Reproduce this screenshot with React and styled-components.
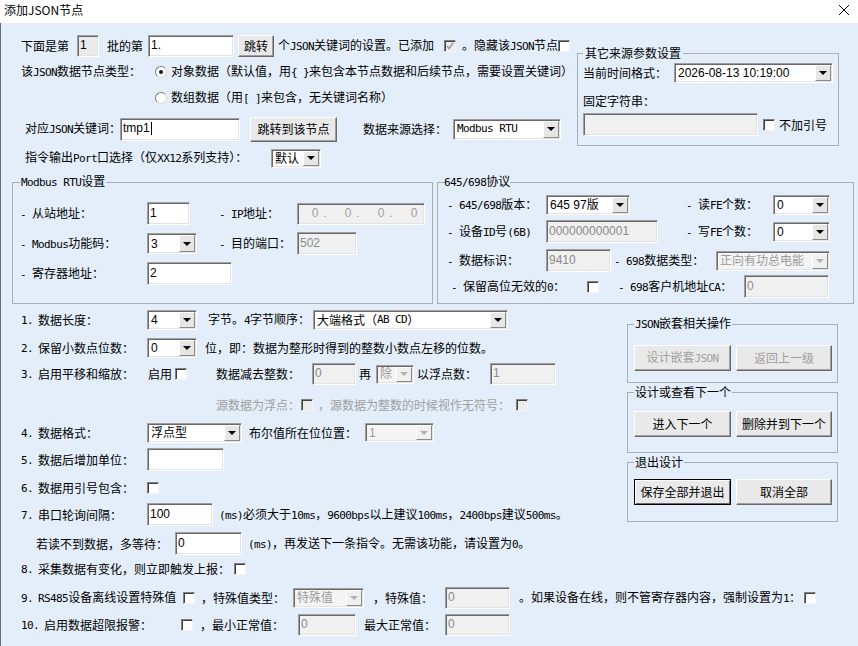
import styled, { createGlobalStyle, css } from "styled-components";

const SANS = `"Noto Sans CJK SC", "Noto Sans", sans-serif`;
const VALUE = `"Liberation Sans", "Noto Sans CJK SC", sans-serif`;

const GlobalStyle = createGlobalStyle`
  html, body {
    margin: 0;
    padding: 0;
    background: #e3eefa;
  }
`;

const Dialog = styled.div`
  width: 858px;
  height: 646px;
  overflow: hidden;
  background: #e3eefa;
  font-family: ${SANS};
  font-size: 12px;
  line-height: 14px;
  color: #000;
  box-shadow: inset 1px 0 0 #6b6b6b;
`;

const TitleBar = styled.div`
  height: 23px;
  box-sizing: border-box;
  padding: 0 8px 3px 4px;
  display: flex;
  align-items: center;
  justify-content: space-between;
  background: #fff;
`;

const Top = styled.div`
  display: flex;
  height: 146px;
`;

const TopMain = styled.div`
  width: 577px;
  box-sizing: border-box;
  padding: 12px 0 0 21px;
`;

const Mid = styled.div`
  display: flex;
  gap: 4px;
  padding-left: 12px;
  margin-top: 5px;
`;

const Lower = styled.div`
  padding-left: 21px;
`;

const LowerTop = styled.div`
  display: flex;
`;

const LowerMain = styled.div`
  width: 606px;
  flex: none;
  padding-top: 5px;
`;

const Side = styled.div`
  display: flex;
  flex-direction: column;
  gap: 2px;
  margin-top: 12px;
`;

const Row = styled.div`
  display: flex;
  align-items: center;
  white-space: nowrap;
  height: ${(p) => p.$h}px;
  margin-top: ${(p) => p.$mt || 0}px;
  padding-left: ${(p) => p.$pl || 0}px;
`;

const ButtonRow = styled.div`
  display: flex;
  gap: 5px;
`;

// half-width latin runs inside dialog captions (narrow fixed pitch)
const Lat = styled.span`
  font-family: "DejaVu Sans Mono", monospace;
  font-size: 11px;
  letter-spacing: -0.6px;
`;

const mixed = (text) =>
  typeof text === "string"
    ? text.split(/([\x20-\x7e]+)/).map((part, i) => (i % 2 ? <Lat key={i}>{part}</Lat> : part))
    : text;

const LabelBox = styled.span`
  flex: none;
  white-space: pre;
  ${(p) => p.$w && css`width: ${p.$w}px;`}
  margin-left: ${(p) => p.$ml || 0}px;
  color: ${(p) => (p.$off ? "#a0a0a0" : "#000")};
`;

const Label = ({ children, ...rest }) => <LabelBox {...rest}>{mixed(children)}</LabelBox>;

const Group = styled.fieldset`
  flex: none;
  box-sizing: border-box;
  min-width: 0;
  margin: ${(p) => p.$mt || 0}px 0 0;
  width: ${(p) => p.$w}px;
  height: ${(p) => p.$h}px;
  padding: ${(p) => p.$pt}px 0 0 ${(p) => p.$pl}px;
  border: 1px solid #a7aeb6;
`;

const LegendBox = styled.legend`
  padding: 0 ${(p) => p.$pad ?? 1}px;
  line-height: 14px;
`;

const Legend = ({ children, ...rest }) => <LegendBox {...rest}>{mixed(children)}</LegendBox>;

const sunken = css`
  border: 1px solid;
  border-color: #a0a0a0 #fff #fff #a0a0a0;
  box-shadow: inset 1px 1px 0 #696969, inset -1px -1px 0 #e3e3e3;
`;

const Edit = styled.div`
  flex: none;
  box-sizing: border-box;
  width: ${(p) => p.$w}px;
  height: ${(p) => p.$h || 23}px;
  margin-left: ${(p) => p.$ml || 0}px;
  display: flex;
  align-items: center;
  padding: 0 2px 2px;
  font-family: ${VALUE};
  background: ${(p) => (p.$off ? "#f0f0f0" : p.$ro ? "#ebebeb" : "#fff")};
  color: ${(p) => (p.$off ? "#8a8a8a" : "#000")};
  ${sunken}
`;

const TextCursor = styled.span`
  width: 1px;
  height: 13px;
  background: #000;
  margin-left: 1px;
`;

const IpBox = styled(Edit)`
  padding-left: 13px;
  color: #a0a0a0;
`;

const Octet = styled.span`
  width: 8px;
  text-align: center;
`;

const Dot = styled.span`
  width: 12px;
  margin-right: 13px;
  text-align: center;
`;

const ComboBox = styled.div`
  flex: none;
  box-sizing: border-box;
  display: flex;
  width: ${(p) => p.$w}px;
  height: ${(p) => p.$h || 20}px;
  margin-left: ${(p) => p.$ml || 0}px;
  padding: 1px;
  background: ${(p) => (p.$off ? "#f4f4f4" : "#fff")};
  ${sunken}
`;

const ComboText = styled.span`
  flex: 1;
  display: flex;
  align-items: center;
  padding-left: 2px;
  overflow: hidden;
  white-space: pre;
  font-family: ${(p) => (p.$mono ? SANS : VALUE)};
  color: ${(p) => (p.$off ? "#9a9a9a" : "#000")};
`;

const ComboArrow = styled.span`
  flex: none;
  width: 16px;
  box-sizing: border-box;
  display: flex;
  align-items: center;
  justify-content: center;
  background: ${(p) => (p.$off ? "#f0f0f0" : "#e6e6e6")};
  border: 1px solid;
  border-color: #fff #8a8a8a #8a8a8a #fff;
  &::after {
    content: "";
    border-left: 4px solid transparent;
    border-right: 4px solid transparent;
    border-top: 4px solid ${(p) => (p.$off ? "#b0b0b0" : "#000")};
  }
`;

const Check = styled.span`
  flex: none;
  box-sizing: border-box;
  width: 12px;
  height: 12px;
  margin-left: ${(p) => p.$ml || 0}px;
  display: flex;
  align-items: center;
  justify-content: center;
  background: ${(p) => (p.$off ? "#ececec" : "#fff")};
  border: 1px solid;
  border-color: #808080 #f4f4f4 #f4f4f4 #808080;
  box-shadow: inset 1px 1px 0 #404040;
`;

const Radio = styled.span`
  flex: none;
  box-sizing: border-box;
  width: 12px;
  height: 12px;
  border-radius: 50%;
  display: flex;
  align-items: center;
  justify-content: center;
  background: #fff;
  border: 1px solid;
  border-color: #7c7c7c #d8d8d8 #d8d8d8 #7c7c7c;
  &::after {
    content: "";
    width: 4px;
    height: 4px;
    border-radius: 50%;
    background: ${(p) => (p.$on ? "#1a1a1a" : "transparent")};
  }
`;

const Btn = styled.button`
  flex: none;
  box-sizing: border-box;
  width: ${(p) => p.$w}px;
  height: ${(p) => p.$h || 26}px;
  margin-left: ${(p) => p.$ml || 0}px;
  padding: 0;
  font-family: ${SANS};
  font-size: 12px;
  line-height: 14px;
  background: #e9e9e9;
  color: ${(p) => (p.disabled ? "#a0a0a0" : "#000")};
  border: 1px solid;
  border-color: #fff #696969 #696969 #fff;
  box-shadow: inset -1px -1px 0 #a0a0a0;
  ${(p) =>
    p.$def &&
    css`
      border-color: #000;
      box-shadow: inset 1px 1px 0 #fff, inset -1px -1px 0 #696969;
    `}
`;

const Combo = ({ w, h, value, off, ml, mono }) => (
  <ComboBox $w={w} $h={h} $off={off} $ml={ml}>
    <ComboText $off={off} $mono={mono}>{mono ? mixed(value) : value}</ComboText>
    <ComboArrow $off={off} />
  </ComboBox>
);

const Tick = ({ color = "#000" }) => (
  <svg width="8" height="8" viewBox="0 0 8 8">
    <polyline points="1,4 3,6.5 7,1" fill="none" stroke={color} strokeWidth="1.5" />
  </svg>
);

const CloseIcon = () => (
  <svg width="12" height="12" viewBox="0 0 12 12">
    <path d="M1 1 L11 11 M11 1 L1 11" stroke="#000" strokeWidth="1" />
  </svg>
);

const App = () => {
  return (
    <Dialog>
      <GlobalStyle />
      <TitleBar>
        <span>添加JSON节点</span>
        <CloseIcon />
      </TitleBar>

      <Top>
        <TopMain>
          <Row $h={22}>
            <Label $w={56}>下面是第</Label>
            <Edit $w={22} $h={22} $ro>1</Edit>
            <Label $w={41} $ml={8}>批的第</Label>
            <Edit $w={86} $h={22}>1.</Edit>
            <Btn $w={36} $h={22} $ml={4}>跳转</Btn>
            <Label $w={166} $ml={4}>个JSON关键词的设置。已添加</Label>
            <Check $off>
              <Tick color="#9a9a9a" />
            </Check>
            <Label $w={96} $ml={6}>。隐藏该JSON节点</Label>
            <Check />
          </Row>
          <Row $h={22} $mt={4}>
            <Label $w={134}>该JSON数据节点类型：</Label>
            <Radio $on />
            <Label $ml={4}>{"对象数据（默认值，用{ }来包含本节点数据和后续节点，需要设置关键词）"}</Label>
          </Row>
          <Row $h={22} $mt={4}>
            <Label $w={134} />
            <Radio />
            <Label $ml={4}>数组数据（用[ ]来包含，无关键词名称）</Label>
          </Row>
          <Row $h={24} $mt={8} $pl={4}>
            <Label $w={95}>对应JSON关键词：</Label>
            <Edit $w={120}>
              tmp1
              <TextCursor />
            </Edit>
            <Btn $w={87} $h={25} $ml={10}>跳转到该节点</Btn>
            <Label $w={90} $ml={26}>数据来源选择：</Label>
            <Combo w={108} h={21} value="Modbus RTU" mono />
          </Row>
          <Row $h={22} $mt={6} $pl={4}>
            <Label $w={246}>指令输出Port口选择（仅XX12系列支持）：</Label>
            <Combo w={50} h={19} value="默认" mono />
          </Row>
        </TopMain>

        <Group $w={262} $h={100} $mt={23} $pt={3} $pl={5}>
          <Legend $pad={2}>其它来源参数设置</Legend>
          <Row $h={20}>
            <Label $w={91}>当前时间格式：</Label>
            <Combo w={159} value="2026-08-13 10:19:00" />
          </Row>
          <Row $h={16} $mt={10}>
            <Label>固定字符串：</Label>
          </Row>
          <Row $h={23} $mt={4}>
            <Edit $w={175} $off />
            <Check $ml={5} />
            <Label $ml={4}>不加引号</Label>
          </Row>
        </Group>
      </Top>

      <Mid>
        <Group $w={421} $h={130} $pt={12} $pl={7}>
          <Legend>Modbus RTU设置</Legend>
          <Row $h={23}>
            <Label $w={127}>- 从站地址：</Label>
            <Edit $w={43}>1</Edit>
            <Label $w={78} $ml={29}>- IP地址：</Label>
            <IpBox $w={128} $h={22} $off>
              {[0, 1, 2, 3].map((i) => (
                <span key={i} style={{ display: "contents" }}>
                  <Octet>0</Octet>
                  {i < 3 && <Dot>.</Dot>}
                </span>
              ))}
            </IpBox>
          </Row>
          <Row $h={23} $mt={7}>
            <Label $w={127}>- Modbus功能码：</Label>
            <Combo w={50} h={21} value="3" />
            <Label $w={78} $ml={22}>- 目的端口：</Label>
            <Edit $w={60} $off>502</Edit>
          </Row>
          <Row $h={23} $mt={7}>
            <Label $w={127}>- 寄存器地址：</Label>
            <Edit $w={85}>2</Edit>
          </Row>
        </Group>

        <Group $w={417} $h={130} $pt={4} $pl={6}>
          <Legend $pad={0}>645/698协议</Legend>
          <Row $h={22} $pl={3}>
            <Label $w={99}>- 645/698版本：</Label>
            <Combo w={84} value="645 97版" />
            <Label $w={87} $ml={56}>- 读FE个数：</Label>
            <Combo w={57} value="0" />
          </Row>
          <Row $h={23} $mt={4} $pl={3}>
            <Label $w={99}>- 设备ID号(6B)</Label>
            <Edit $w={112} $off>000000000001</Edit>
            <Label $w={87} $ml={28}>- 写FE个数：</Label>
            <Combo w={57} value="0" />
          </Row>
          <Row $h={23} $mt={6} $pl={3}>
            <Label $w={99}>- 数据标识：</Label>
            <Edit $w={65} $off>9410</Edit>
            <Label $w={102} $ml={3}>- 698数据类型：</Label>
            <Combo w={114} value="正向有功总电能" off />
          </Row>
          <Row $h={23} $mt={3} $pl={7}>
            <Label $w={136}>- 保留高位无效的0：</Label>
            <Check />
            <Label $w={126} $ml={19}>- 698客户机地址CA：</Label>
            <Edit $w={85} $off>0</Edit>
          </Row>
        </Group>
      </Mid>

      <Lower>
        <LowerTop>
          <LowerMain>
            <Row $h={21}>
              <Label $w={17}>1.</Label>
              <Label $w={109}>数据长度：</Label>
              <Combo w={50} value="4" />
              <Label $w={105} $ml={11}>字节。4字节顺序：</Label>
              <Combo w={195} value="大端格式（AB CD）" mono />
            </Row>
            <Row $h={21} $mt={7}>
              <Label $w={17}>2.</Label>
              <Label $w={109}>保留小数点位数：</Label>
              <Combo w={50} value="0" />
              <Label $ml={8}>位，即：数据为整形时得到的整数小数点左移的位数。</Label>
            </Row>
            <Row $h={22} $mt={5}>
              <Label $w={17}>3.</Label>
              <Label $w={110}>启用平移和缩放：</Label>
              <Label $w={27}>启用</Label>
              <Check />
              <Label $w={96} $ml={29}>数据减去整数：</Label>
              <Edit $w={44} $h={22} $off>0</Edit>
              <Label $w={17} $ml={3}>再</Label>
              <Combo w={38} h={19} value="除" off />
              <Label $w={73} $ml={3}>以浮点数：</Label>
              <Edit $w={66} $h={22} $off>1</Edit>
            </Row>
            <Row $h={18} $mt={11} $pl={195}>
              <Label $w={85} $off>源数据为浮点：</Label>
              <Check $off />
              <Label $w={198} $ml={5} $off>，源数据为整数的时候视作无符号：</Label>
              <Check $off />
            </Row>
            <Row $h={21} $mt={8}>
              <Label $w={17}>4.</Label>
              <Label $w={109}>数据格式：</Label>
              <Combo w={95} value="浮点型" />
              <Label $w={116} $ml={7}>布尔值所在位位置：</Label>
              <Combo w={69} h={19} value="1" off />
            </Row>
            <Row $h={23} $mt={5}>
              <Label $w={17}>5.</Label>
              <Label $w={109}>数据后增加单位：</Label>
              <Edit $w={77} />
            </Row>
            <Row $h={18} $mt={8}>
              <Label $w={17}>6.</Label>
              <Label $w={109}>数据用引号包含：</Label>
              <Check />
            </Row>
            <Row $h={23} $mt={6}>
              <Label $w={17}>7.</Label>
              <Label $w={109}>串口轮询间隔：</Label>
              <Edit $w={66}>100</Edit>
              <Label $ml={6}>(ms)必须大于10ms，9600bps以上建议100ms，2400bps建议500ms。</Label>
            </Row>
            <Row $h={23} $mt={6} $pl={15}>
              <Label $w={139}>若读不到数据，多等待：</Label>
              <Edit $w={67}>0</Edit>
              <Label $ml={6}>(ms)，再发送下一条指令。无需该功能，请设置为0。</Label>
            </Row>
          </LowerMain>

          <Side>
            <Group $w={211} $h={67} $pt={13} $pl={6}>
              <Legend>JSON嵌套相关操作</Legend>
              <ButtonRow>
                <Btn $w={97} disabled>设计嵌套{mixed("JSON")}</Btn>
                <Btn $w={96} disabled>返回上一级</Btn>
              </ButtonRow>
            </Group>
            <Group $w={211} $h={68} $pt={12} $pl={6}>
              <Legend>设计或查看下一个</Legend>
              <ButtonRow>
                <Btn $w={97}>进入下一个</Btn>
                <Btn $w={96}>删除并到下一个</Btn>
              </ButtonRow>
            </Group>
            <Group $w={211} $h={67} $pt={10} $pl={6}>
              <Legend>退出设计</Legend>
              <ButtonRow>
                <Btn $w={97} $def>保存全部并退出</Btn>
                <Btn $w={96}>取消全部</Btn>
              </ButtonRow>
            </Group>
          </Side>
        </LowerTop>

        <Row $h={18} $mt={5}>
          <Label $w={17}>8.</Label>
          <Label $w={196}>采集数据有变化，则立即触发上报：</Label>
          <Check />
        </Row>
        <Row $h={22} $mt={9}>
          <Label $w={17}>9.</Label>
          <Label $w={145}>RS485设备离线设置特殊值</Label>
          <Check />
          <Label $w={92} $ml={6}>，特殊值类型：</Label>
          <Combo w={71} value="特殊值" off />
          <Label $w={72} $ml={9}>，特殊值：</Label>
          <Edit $w={65} $h={22} $off>0</Edit>
          <Label $w={285} $ml={9}>。如果设备在线，则不管寄存器内容，强制设置为1：</Label>
          <Check />
        </Row>
        <Row $h={22} $mt={5}>
          <Label $w={23}>10.</Label>
          <Label $w={137}>启用数据超限报警：</Label>
          <Check />
          <Label $w={98} $ml={7}>，最小正常值：</Label>
          <Edit $w={58} $h={22} $off>0</Edit>
          <Label $w={81} $ml={8}>最大正常值：</Label>
          <Edit $w={65} $h={22} $off>0</Edit>
        </Row>
      </Lower>
    </Dialog>
  );
};

export default App;
